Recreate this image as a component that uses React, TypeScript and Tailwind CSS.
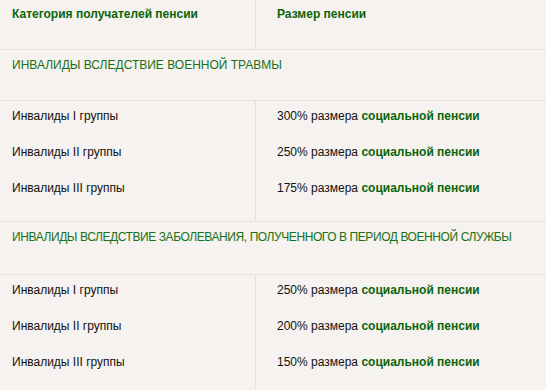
import React from "react";

type Group = { title: string; tight?: boolean; rows: { label: string; percent: string }[] };

const groups: Group[] = [
  {
    title: "ИНВАЛИДЫ ВСЛЕДСТВИЕ ВОЕННОЙ ТРАВМЫ",
    rows: [
      { label: "Инвалиды I группы", percent: "300%" },
      { label: "Инвалиды II группы", percent: "250%" },
      { label: "Инвалиды III группы", percent: "175%" },
    ],
  },
  {
    title: "ИНВАЛИДЫ ВСЛЕДСТВИЕ ЗАБОЛЕВАНИЯ, ПОЛУЧЕННОГО В ПЕРИОД ВОЕННОЙ СЛУЖБЫ",
    tight: true,
    rows: [
      { label: "Инвалиды I группы", percent: "250%" },
      { label: "Инвалиды II группы", percent: "200%" },
      { label: "Инвалиды III группы", percent: "150%" },
    ],
  },
];

const PensionTable = () => (
  <div className="min-h-screen w-full bg-[#f6f2ef] font-['Liberation_Sans',Arial,sans-serif] text-[12px] leading-[16px] text-[#111]">
    {/* header */}
    <div className="grid grid-cols-[256px_1fr] border-b border-[#e6e1dd]">
      <div className="h-[49px] border-r border-[#e6e1dd] pl-3 pt-[6px] font-bold text-[#0b640b]">
        Категория получателей пенсии
      </div>
      <div className="pl-[21px] pt-[6px] font-bold text-[#0b640b]">Размер пенсии</div>
    </div>

    {groups.map((group) => (
      <React.Fragment key={group.title}>
        <div
          className={`border-b border-[#e6e1dd] pl-3 pt-[7px] whitespace-nowrap text-[#187018] ${
            group.tight ? "h-[53px] tracking-[-0.42px]" : "h-[51px]"
          }`}
        >
          {group.title}
        </div>
        <div className="grid grid-cols-[256px_1fr] border-b border-[#e6e1dd]">
          <div className="border-r border-[#e6e1dd] pb-[5px] pl-3 pt-[7px]">
            {group.rows.map((row) => (
              <p key={row.label} className="mb-[20px]">
                {row.label}
              </p>
            ))}
          </div>
          <div className="pb-[5px] pl-[21px] pt-[7px]">
            {group.rows.map((row) => (
              <p key={row.label} className="mb-[20px]">
                {row.percent} размера{" "}
                <span className="font-bold text-[#0b640b]">социальной пенсии</span>
              </p>
            ))}
          </div>
        </div>
      </React.Fragment>
    ))}
  </div>
);

export default function App() {
  return <PensionTable />;
}
